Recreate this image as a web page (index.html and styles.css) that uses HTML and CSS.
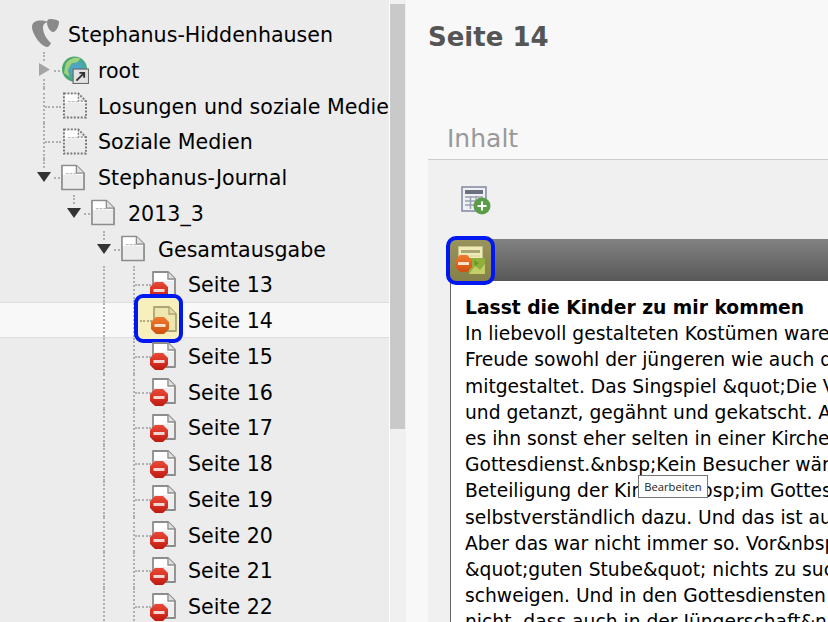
FILE: index.html
```html
<!DOCTYPE html>
<html lang="de">
<head>
<meta charset="utf-8">
<title>Seite 14</title>
<link rel="stylesheet" href="styles.css">
</head>
<body>
<svg class="defs" width="0" height="0" aria-hidden="true">
  <defs>
    <radialGradient id="gGlobe" cx=".55" cy=".5" r=".6"><stop offset="0" stop-color="#4fa6dc"/><stop offset=".6" stop-color="#4aa8a0"/><stop offset="1" stop-color="#47a84a"/></radialGradient>
    <linearGradient id="gRed" x1="0" y1="0" x2="0" y2="1"><stop offset="0" stop-color="#ea4a38"/><stop offset="1" stop-color="#c01a10"/></linearGradient>
    <linearGradient id="gOrange" x1="0" y1="0" x2="0" y2="1"><stop offset="0" stop-color="#f07a30"/><stop offset="1" stop-color="#d0500f"/></linearGradient>
    <symbol id="page" viewBox="0 0 25 27">
      <path d="M1 1H16L24 9V26H1Z" fill="#ebebeb" stroke="#8c8c8c" stroke-width="1.800" stroke-linejoin="round"/>
      <path d="M2 2H15.500V9H23V11H2Z" fill="#fff"/>
      <path d="M16 1V9H24" fill="#e0e0e0" stroke="#8c8c8c" stroke-width="1.300"/>
      <path d="M5 9.500H17" stroke="#bdbdbd" stroke-width="1.200" stroke-dasharray="3 1"/>
    </symbol>
    <symbol id="page-hidden" viewBox="0 0 25 27">
      <path d="M1 1H16L24 9V26H1Z" fill="#ebebeb" stroke="#777" stroke-width="2" stroke-dasharray="2 1.600"/>
      <path d="M2 2H15.500V9H23V11H2Z" fill="#fff"/>
      <path d="M16 1V9H24" fill="none" stroke="#777" stroke-width="1.300" stroke-dasharray="2 1.500"/>
      <path d="M5 9.500H17" stroke="#bdbdbd" stroke-width="1.200" stroke-dasharray="3 1"/>
    </symbol>
    <symbol id="page-off" viewBox="0 0 26 29">
      <path d="M3 1H18L25 8V25H3Z" fill="#eeeeee" stroke="#8c8c8c" stroke-width="1.800" stroke-linejoin="round"/>
      <path d="M4 2H17V8H24V10H4Z" fill="#fff"/>
      <path d="M18 1V8H25" fill="#e0e0e0" stroke="#8c8c8c" stroke-width="1.300"/>
      <path d="M5 11H13L18 16V23L13 28H5L0 23V16Z" fill="url(#gRed)"/>
      <rect x="3.500" y="18" width="11" height="3" fill="#f6d6d0"/>
    </symbol>
    <symbol id="page-sel" viewBox="0 0 26 29">
      <path d="M3 1H18L25 8V25H3Z" fill="#f0e7ae" stroke="#aaa676" stroke-width="1.800" stroke-linejoin="round"/>
      <path d="M18 1V8H25" fill="#e4dca4" stroke="#aaa676" stroke-width="1.300"/>
      <path d="M5 11H13L18 16V23L13 28H5L0 23V16Z" fill="url(#gOrange)"/>
      <rect x="3.500" y="18" width="11" height="3" fill="#fbe3cf"/>
    </symbol>
    <symbol id="globe" viewBox="0 0 28 28">
      <circle cx="13" cy="13" r="13" fill="url(#gGlobe)"/>
      <path d="M4 7C8 2 14 0 19 2L16 6L10 7L6 14L8 21L2 17Z" fill="#9fd27a"/>
      <rect x="11.500" y="13" width="16" height="15" fill="#e2e2e2" stroke="#6a6a6a" stroke-width="1.200"/>
      <path d="M15 25L22 18M18 17H23V22" fill="none" stroke="#333" stroke-width="2"/>
    </symbol>
    <symbol id="new-el" viewBox="0 0 30 29">
      <rect x="1" y="1" width="24" height="24" fill="#eef0f4" stroke="#8088a0" stroke-width="1.500"/>
      <rect x="4" y="4" width="18" height="4" fill="#6a7080"/>
      <path d="M4 11H22M4 15H22M4 19H22M9.500 10V23M15 10V23" stroke="#9aa0b0" stroke-width="1.500"/>
      <circle cx="21" cy="20" r="8.500" fill="#5a9c48"/>
      <path d="M21 15.500V24.500M16.500 20H25.500" stroke="#fff" stroke-width="2"/>
    </symbol>
    <symbol id="el-off" viewBox="0 0 31 29">
      <rect x="3.500" y=".5" width="24" height="18" fill="#efeab8" stroke="#c6c28c"/>
      <rect x="6" y="4" width="19" height="3" fill="#aaa672"/>
      <path d="M7 10H25" stroke="#d0cb98" stroke-width="1" stroke-dasharray="3 1"/>
      <rect x="14" y="12" width="16" height="16" fill="#8fb03a"/>
      <path d="M14 28L20 20L25 24L30 18V28Z" fill="#c4cf6a"/>
      <path d="M19 14L24 17L20 20Z" fill="#6d9828"/>
      <path d="M5 9H12L17 14V21L12 26H5L0 21V14Z" fill="url(#gOrange)"/>
      <rect x="3" y="16" width="11" height="3" fill="#fbe3cf"/>
    </symbol>
  </defs>
</svg>
<div class="page">
  <nav class="tree">
    <div class="row">
      <span class="cell"><svg class="logo" viewBox="0 0 27 28"><path d="M15 28C8 27 0 14 0 8C0 3 4 1.500 9 1.500C12 1.500 14 2 16 3C12 4 11 6 11 9C11 14 15 21 19 24C18 26 17 28 15 28Z" fill="#8a8a8a"/><path d="M18 0C22 0 27 1 27 3C27 7 24 13 21 13C18 13 15 7 15 4C15 1.500 16 0 18 0Z" fill="#8a8a8a"/></svg></span>
      <span class="label">Stephanus-Hiddenhausen</span>
    </div>
    <div class="row">
      <span class="cell v"><svg class="arrow closed" viewBox="0 0 12 14"><path d="M0 0L12 7L0 14Z"/></svg><i class="h"></i></span>
      <span class="icon"><svg class="i-globe"><use href="#globe"/></svg></span>
      <span class="label">root</span>
    </div>
    <div class="row">
      <span class="cell v"><i class="h long"></i></span>
      <span class="icon"><svg class="i-page shift"><use href="#page-hidden"/></svg></span>
      <span class="label">Losungen und soziale Medien</span>
    </div>
    <div class="row">
      <span class="cell v"><i class="h long"></i></span>
      <span class="icon"><svg class="i-page shift"><use href="#page-hidden"/></svg></span>
      <span class="label">Soziale Medien</span>
    </div>
    <div class="row">
      <span class="cell v top"><svg class="arrow open" viewBox="0 0 14 10"><path d="M0 0H14L7 10Z"/></svg><i class="h"></i></span>
      <span class="icon"><svg class="i-page"><use href="#page"/></svg></span>
      <span class="label">Stephanus-Journal</span>
    </div>
    <div class="row">
      <span class="cell"></span>
      <span class="cell v top"><svg class="arrow open" viewBox="0 0 14 10"><path d="M0 0H14L7 10Z"/></svg><i class="h"></i></span>
      <span class="icon"><svg class="i-page"><use href="#page"/></svg></span>
      <span class="label">2013_3</span>
    </div>
    <div class="row">
      <span class="cell"></span><span class="cell"></span>
      <span class="cell v top"><svg class="arrow open" viewBox="0 0 14 10"><path d="M0 0H14L7 10Z"/></svg><i class="h"></i></span>
      <span class="icon"><svg class="i-page"><use href="#page"/></svg></span>
      <span class="label">Gesamtausgabe</span>
    </div>
    <div class="row">
      <span class="cell"></span><span class="cell"></span><span class="cell v"></span>
      <span class="cell v"><i class="h long"></i></span>
      <span class="icon"><svg class="i-off"><use href="#page-off"/></svg></span>
      <span class="label">Seite 13</span>
    </div>
    <div class="row selected">
      <span class="cell"></span><span class="cell"></span><span class="cell v"></span>
      <span class="cell v"></span>
      <span class="hl"><i class="h-sel"></i><svg class="i-off"><use href="#page-sel"/></svg></span>
      <span class="icon"></span>
      <span class="label">Seite 14</span>
    </div>
    <div class="row"><span class="cell"></span><span class="cell"></span><span class="cell v"></span><span class="cell v"><i class="h long"></i></span><span class="icon"><svg class="i-off"><use href="#page-off"/></svg></span><span class="label">Seite 15</span></div>
    <div class="row"><span class="cell"></span><span class="cell"></span><span class="cell v"></span><span class="cell v"><i class="h long"></i></span><span class="icon"><svg class="i-off"><use href="#page-off"/></svg></span><span class="label">Seite 16</span></div>
    <div class="row"><span class="cell"></span><span class="cell"></span><span class="cell v"></span><span class="cell v"><i class="h long"></i></span><span class="icon"><svg class="i-off"><use href="#page-off"/></svg></span><span class="label">Seite 17</span></div>
    <div class="row"><span class="cell"></span><span class="cell"></span><span class="cell v"></span><span class="cell v"><i class="h long"></i></span><span class="icon"><svg class="i-off"><use href="#page-off"/></svg></span><span class="label">Seite 18</span></div>
    <div class="row"><span class="cell"></span><span class="cell"></span><span class="cell v"></span><span class="cell v"><i class="h long"></i></span><span class="icon"><svg class="i-off"><use href="#page-off"/></svg></span><span class="label">Seite 19</span></div>
    <div class="row"><span class="cell"></span><span class="cell"></span><span class="cell v"></span><span class="cell v"><i class="h long"></i></span><span class="icon"><svg class="i-off"><use href="#page-off"/></svg></span><span class="label">Seite 20</span></div>
    <div class="row"><span class="cell"></span><span class="cell"></span><span class="cell v"></span><span class="cell v"><i class="h long"></i></span><span class="icon"><svg class="i-off"><use href="#page-off"/></svg></span><span class="label">Seite 21</span></div>
    <div class="row"><span class="cell"></span><span class="cell"></span><span class="cell v"></span><span class="cell v"><i class="h long"></i></span><span class="icon"><svg class="i-off"><use href="#page-off"/></svg></span><span class="label">Seite 22</span></div>
  </nav>
  <div class="scrollbar"><div class="thumb"></div></div>
  <main class="main">
    <div class="title"><h1>Seite 14</h1></div>
    <div class="tab">Inhalt</div>
    <section class="section">
      <svg class="new-el"><use href="#new-el"/></svg>
      <article class="element">
        <header class="el-head">
          <span class="el-hl"><svg class="el-icon"><use href="#el-off"/></svg></span>
        </header>
        <div class="el-body">
          <p class="el-title">Lasst die Kinder zu mir kommen</p>
          <p>In liebevoll gestalteten Kostümen waren</p>
          <p>Freude sowohl der jüngeren wie auch der</p>
          <p>mitgestaltet. Das Singspiel &amp;quot;Die Vogelhochzeit</p>
          <p>und getanzt, gegähnt und gekatscht. Auch</p>
          <p>es ihn sonst eher selten in einer Kirche</p>
          <p>Gottesdienst.&amp;nbsp;Kein Besucher wäre</p>
          <p>Beteiligung der Kinder&amp;nbsp;im Gottesdienst</p>
          <p>selbstverständlich dazu. Und das ist auch</p>
          <p>Aber das war nicht immer so. Vor&amp;nbsp;</p>
          <p>&amp;quot;guten Stube&amp;quot; nichts zu suchen</p>
          <p>schweigen. Und in den Gottesdiensten</p>
          <p>nicht, dass auch in der Jüngerschaft&amp;nbsp;</p>
        </div>
      </article>
      <div class="tooltip">Bearbeiten</div>
    </section>
  </main>
</div>
</body>
</html>
```

FILE: styles.css
```css
* { box-sizing: border-box; }
html, body { margin: 0; padding: 0; height: 100%; overflow: hidden; }
body { font-family: "DejaVu Sans", Verdana, sans-serif; color: #000; background: #f8f8f8; }
.defs { position: absolute; }
.page { display: flex; width: 828px; height: 622px; overflow: hidden; }

/* tree */
.tree { width: 389px; flex: none; height: 622px; padding: 16.2px 0 0 29px; background: #ececec; overflow: hidden; font-size: 20.6px; }
.row { display: flex; align-items: center; height: 35.75px; white-space: nowrap; position: relative; }
.row.selected { background: #f8f8f8; margin-left: -29px; padding-left: 29px; box-shadow: 0 -1px 0 #dedede, 0 1px 0 #dedede; z-index: 0; height: 34.75px; margin-top: .5px; margin-bottom: .5px; }
.cell { width: 30px; height: 100%; flex: none; position: relative; display: flex; align-items: center; justify-content: center; }
.cell.v::before { content: ""; position: absolute; left: 14px; top: 0; bottom: 0; border-left: 2px dotted #b0b0b0; }
.cell.v.top::before { bottom: 55%; top: 0; }
.h { position: absolute; left: 25px; width: 6px; top: 50%; border-top: 2px dotted #b0b0b0; }
.h.long { left: 16px; width: 16px; }
.arrow { position: relative; z-index: 1; background: #ececec; }
.arrow.closed { width: 11px; height: 13px; fill: #a4a4a4; margin-right: 0; box-shadow: 0 0 0 2px #ececec; background: #ececec; }
.arrow.open { width: 14px; height: 10px; fill: #333; box-shadow: 0 0 0 2px #ececec; }
.logo { width: 27px; height: 28px; margin-top: -2px; margin-left: 3px; }
.icon { width: 30px; height: 100%; flex: none; display: flex; align-items: center; }
.label { margin-left: 9px; padding-top: 2px; color: #000; }
.i-page { width: 24px; height: 27px; margin-left: 2px; }
.i-page.shift { margin-left: 4px; }
.i-globe { width: 28px; height: 28px; margin-left: 3px; }
.i-off { width: 26px; height: 29px; margin-left: 1px; margin-top: 2px; }
.hl { position: absolute; left: 134px; top: -9px; width: 49px; height: 49px; border: 4px solid #0018f0; border-radius: 9px; background: #f7f0bd; z-index: 2; }
.hl .i-off { position: absolute; left: 13px; top: 8px; margin: 0; }
.h-sel { position: absolute; left: 2px; top: 22px; width: 12px; border-top: 2px dotted #b0ac7c; }

/* scrollbar */
.scrollbar { width: 17px; flex: none; height: 622px; border-left: 1px solid #fff; background: #f0f0f0; padding-top: 4px; }
.thumb { width: 15px; height: 425px; background: #c9c9c9; }

/* main */
.main { flex: 1; min-width: 0; padding-left: 22px; background: #f8f8f8; position: relative; }
.title { height: 120px; padding-top: 22px; }
.title h1 { margin: 0; font-size: 26px; line-height: 30px; font-weight: 700; color: #555; white-space: nowrap; }
.tab { height: 39px; padding: 4px 0 0 19px; font-size: 25px; line-height: 30px; color: #999; }
.section { height: 463px; border-top: 1px solid #ccc; background: #f0f0f0; padding: 26px 0 0 22px; position: relative; overflow: hidden; }
.new-el { display: block; width: 30px; height: 29px; margin-left: 11px; margin-bottom: 24px; }
.element { position: relative; }
.el-head { height: 42px; background: linear-gradient(#828282, #585858); position: relative; }
.el-hl { position: absolute; left: -4px; top: -3px; width: 49px; height: 49px; border: 4px solid #0018f0; border-radius: 10px; background: linear-gradient(#99935e, #857f48); display: flex; align-items: center; justify-content: center; }
.el-icon { width: 31px; height: 29px; }
.el-body { background: #fff; border-left: 1px solid #666; padding: 14px 0 0 14px; font-size: 18.7px; line-height: 26.2px; white-space: nowrap; overflow: hidden; }
.el-body p { margin: 0; }
.el-body .el-title { font-weight: 700; }
.tooltip { position: absolute; left: 210px; top: 315px; width: 70px; height: 23px; border: 1px solid #767676; background: #fff; font-family: "Open Sans", sans-serif; font-size: 11.2px; line-height: 21px; text-align: center; color: #222; }
```
